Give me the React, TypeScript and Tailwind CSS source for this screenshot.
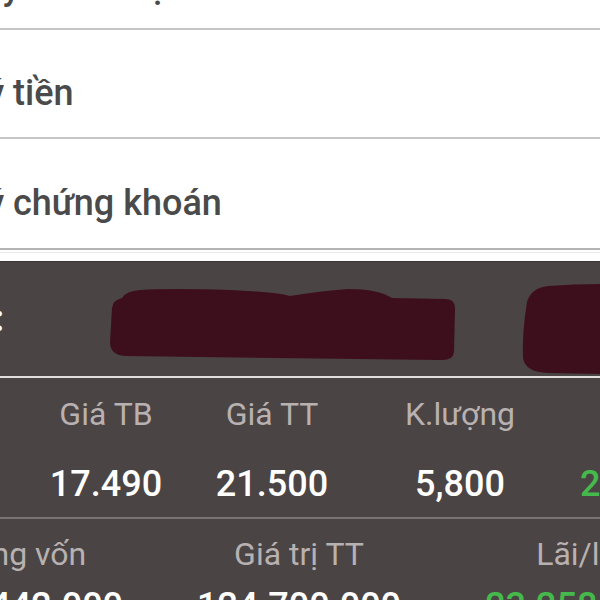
import React from "react";

const font = { fontFamily: "Roboto, 'Noto Sans', 'Liberation Sans', sans-serif" };

export default function App() {
  return (
    <div className="w-[600px] h-[600px] overflow-hidden bg-white" style={font}>
      {/* top clipped row */}
      <div className="h-[28px] overflow-hidden">
        <div className="ml-[-100px] mt-[-31px] whitespace-nowrap text-[36px] leading-[36px] font-medium text-[#4a4a4a]">
          Quản lý danh mục đầu tư
        </div>
      </div>
      <div className="h-[2px] bg-[#c6c6c6]" />
      {/* Quản lý tiền */}
      <div className="h-[107px] overflow-hidden pt-[45px]">
        <div className="ml-[-116px] whitespace-nowrap text-[36px] leading-[36px] font-medium text-[#4a4a4a]">
          Quản lý tiền
        </div>
      </div>
      <div className="h-[2px] bg-[#c6c6c6]" />
      {/* Quản lý chứng khoán */}
      <div className="h-[109px] overflow-hidden pt-[46px]">
        <div className="ml-[-116px] whitespace-nowrap text-[36px] leading-[36px] font-medium text-[#4a4a4a]">
          Quản lý chứng khoán
        </div>
      </div>
      <div className="h-[2px] bg-[#b4b4b4]" />
      <div className="h-[9px] bg-white">
        <div className="mt-[2px] h-[1px] bg-[#ebebeb]" />
      </div>

      {/* dark section */}
      <div className="bg-[#4b4444]">
        {/* redacted row */}
        <div className="relative h-[115px] border-t border-[#3a3434]">
          <div className="flex h-full items-center">
            <span className="ml-[-6px] text-[36px] leading-[36px] font-bold text-white">:</span>
          </div>
          <svg className="absolute inset-0" width="600" height="115" viewBox="0 0 600 115">
            <path
              d="M122 36 Q126 29 140 28 Q170 26 230 28 Q275 30 290 34 Q320 29 348 27 Q378 27 392 36 L445 37 Q456 37 455 48 L454 90 Q453 99 440 98 L125 94 Q110 93 110 80 L112 46 Q113 38 122 36 Z"
              fill="#3d0f1c"
            />
            <path
              d="M548 24 Q575 22 600 22 L600 112 L548 111 Q525 110 523 96 Q522 70 527 40 Q531 26 548 24 Z"
              fill="#3d0f1c"
            />
          </svg>
        </div>
        <div className="h-[2px] bg-[#e2dede]" />

        {/* row 1 */}
        <div className="h-[139px] pt-[20px]">
          <div className="flex ml-[24px] text-[32px] leading-[32px] text-[#b8b1b1]">
            <div className="w-[164px] shrink-0 text-center whitespace-nowrap">Giá TB</div>
            <div className="w-[168px] shrink-0 text-center whitespace-nowrap">Giá TT</div>
            <div className="w-[208px] shrink-0 text-center whitespace-nowrap">K.lượng</div>
          </div>
          <div className="flex ml-[24px] mt-[36px] text-[36px] leading-[36px] font-medium text-white">
            <div className="w-[164px] shrink-0 text-center whitespace-nowrap">17.490</div>
            <div className="w-[168px] shrink-0 text-center whitespace-nowrap">21.500</div>
            <div className="w-[208px] shrink-0 text-center whitespace-nowrap">5,800</div>
            <div className="w-[200px] shrink-0 pl-[16px] whitespace-nowrap text-[#45b94c]">22,93%</div>
          </div>
        </div>
        <div className="h-[2px] bg-[#7b7373]" />

        {/* row 2 */}
        <div className="h-[83px] pt-[19px]">
          <div className="flex ml-[-118px] text-[32px] leading-[32px] text-[#b8b1b1]">
            <div className="w-[278px] shrink-0 text-center whitespace-nowrap">Tổng vốn</div>
            <div className="w-[278px] shrink-0 text-center whitespace-nowrap">Giá trị TT</div>
            <div className="w-[278px] shrink-0 text-center whitespace-nowrap">Lãi/lỗ</div>
          </div>
          <div className="flex ml-[-118px] mt-[18px] text-[36px] leading-[36px] font-medium text-white">
            <div className="w-[278px] shrink-0 text-center whitespace-nowrap">101.442.000</div>
            <div className="w-[278px] shrink-0 text-center whitespace-nowrap">124.700.000</div>
            <div className="w-[278px] shrink-0 text-center whitespace-nowrap text-[#45b94c]">23.258.000</div>
          </div>
        </div>
      </div>
    </div>
  );
}
